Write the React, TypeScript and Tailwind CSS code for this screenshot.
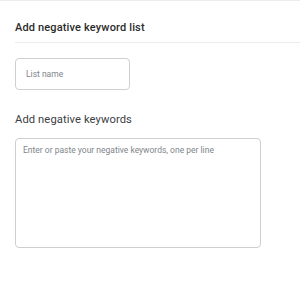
export default function App() {
  return (
    <div className="w-[300px] h-[282px] bg-white border-t border-[#ececec] font-['Roboto',sans-serif]">
      <div className="ml-[15px] h-[42px] border-b border-[#ececec] pt-[20px]">
        <h2 className="text-[11px] leading-[14px] font-medium tracking-[0.15px] text-[#2b2b2b]">
          Add negative keyword list
        </h2>
      </div>

      <div className="pl-[15px]">
        <input
          type="text"
          placeholder="List name"
          className="mt-[15px] block w-[115px] h-[32px] rounded-[4px] border border-[#cfcfcf] px-[10px] text-[8.5px] text-[#202124] placeholder-[#80868b] outline-none"
        />

        <h3 className="mt-[23px] text-[11.2px] leading-[14px] tracking-[0.1px] text-[#3c4043]">
          Add negative keywords
        </h3>

        <textarea
          placeholder="Enter or paste your negative keywords, one per line"
          className="mt-[11px] block w-[246px] h-[110px] resize-none rounded-[4px] border border-[#cfcfcf] px-[7px] py-[5px] text-[8.5px] leading-[12px] text-[#202124] placeholder-[#80868b] outline-none"
        />
      </div>
    </div>
  );
}
